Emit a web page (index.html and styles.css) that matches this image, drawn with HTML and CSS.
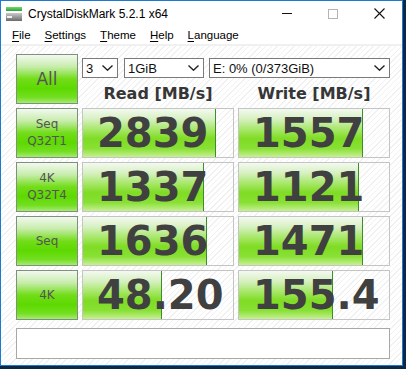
FILE: index.html
```html
<!DOCTYPE html>
<html lang="en">
<head>
  <meta charset="UTF-8">
  <title>CrystalDiskMark 5.2.1 x64</title>
  <link rel="stylesheet" href="styles.css">
</head>
<body>
  <div class="window">
    <div class="titlebar">
      <svg class="app-icon" width="16" height="14" viewBox="0 0 16 14">
        <defs>
          <linearGradient id="gTop" x1="0" y1="0" x2="0" y2="1">
            <stop offset="0" stop-color="#6fdc6f"/>
            <stop offset="1" stop-color="#2f9e3a"/>
          </linearGradient>
          <linearGradient id="gBody" x1="0" y1="0" x2="0" y2="1">
            <stop offset="0" stop-color="#c9c9c9"/>
            <stop offset="1" stop-color="#6a6a6a"/>
          </linearGradient>
        </defs>
        <rect x="0" y="0" width="16" height="4" fill="url(#gTop)"/>
        <rect x="0" y="6" width="16" height="8" fill="url(#gBody)"/>
        <rect x="1" y="9" width="5" height="2" fill="#f2f2f2"/>
      </svg>
      <span class="title">CrystalDiskMark 5.2.1 x64</span>
      <div class="caption">
        <div class="cap-btn"><span class="ico-min"></span></div>
        <div class="cap-btn"><span class="ico-max"></span></div>
        <div class="cap-btn">
          <svg width="11" height="11" viewBox="0 0 11 11">
            <path d="M0.5 0.5 L10.5 10.5 M10.5 0.5 L0.5 10.5" stroke="#111" stroke-width="1.1" fill="none"/>
          </svg>
        </div>
      </div>
    </div>

    <div class="menubar">
      <span class="menu-item"><u>F</u>ile</span>
      <span class="menu-item"><u>S</u>ettings</span>
      <span class="menu-item"><u>T</u>heme</span>
      <span class="menu-item"><u>H</u>elp</span>
      <span class="menu-item"><u>L</u>anguage</span>
    </div>

    <div class="main">
      <div class="grid">
        <div class="label label-all">All</div>
        <div class="top">
          <div class="combos">
            <div class="combo combo-count"><span>3</span>
              <svg width="11" height="6" viewBox="0 0 11 6"><polyline points="0.5,0.5 5.5,5.2 10.5,0.5" fill="none" stroke="#222" stroke-width="1.4"/></svg>
            </div>
            <div class="combo combo-size"><span>1GiB</span>
              <svg width="11" height="6" viewBox="0 0 11 6"><polyline points="0.5,0.5 5.5,5.2 10.5,0.5" fill="none" stroke="#222" stroke-width="1.4"/></svg>
            </div>
            <div class="combo combo-drive"><span>E: 0% (0/373GiB)</span>
              <svg width="11" height="6" viewBox="0 0 11 6"><polyline points="0.5,0.5 5.5,5.2 10.5,0.5" fill="none" stroke="#222" stroke-width="1.4"/></svg>
            </div>
          </div>
          <div class="heads">
            <div class="head">Read [MB/s]</div>
            <div class="head">Write [MB/s]</div>
          </div>
        </div>

        <div class="label">Seq<br>Q32T1</div>
        <div class="cell"><div class="bar" style="width: 88.7%"></div><div class="num">2839</div></div>
        <div class="cell"><div class="bar" style="width: 82.7%"></div><div class="num">1557</div></div>

        <div class="label">4K<br>Q32T4</div>
        <div class="cell"><div class="bar" style="width: 80.7%"></div><div class="num">1337</div></div>
        <div class="cell"><div class="bar" style="width: 80%"></div><div class="num">1121</div></div>

        <div class="label">Seq</div>
        <div class="cell"><div class="bar" style="width: 82.7%"></div><div class="num">1636</div></div>
        <div class="cell"><div class="bar" style="width: 82.7%"></div><div class="num">1471</div></div>

        <div class="label">4K</div>
        <div class="cell"><div class="bar" style="width: 52.7%"></div><div class="num">48.20</div></div>
        <div class="cell"><div class="bar" style="width: 62.7%"></div><div class="num">155.4</div></div>
      </div>
      <div class="comment"></div>
    </div>
  </div>
</body>
</html>
```

FILE: styles.css
```css
body {
  margin: 0;
  background: #0d2847;
  font-family: "Liberation Sans", Arial, sans-serif;
  color: #000;
}

.window {
  width: 403px;
  height: 366px;
  box-sizing: border-box;
  border: 1px solid #1a7bd0;
  background: #fff;
  display: flex;
  flex-direction: column;
}

/* title bar */
.titlebar {
  height: 25px;
  flex: none;
  display: flex;
  align-items: center;
  padding-left: 5px;
  font-size: 12px;
}

.app-icon {
  flex: none;
  margin-right: 6px;
}

.caption {
  margin-left: auto;
  display: flex;
  height: 100%;
}

.cap-btn {
  width: 46px;
  display: flex;
  align-items: center;
  justify-content: center;
}

.ico-min {
  width: 10px;
  height: 1px;
  background: #111;
}

.ico-max {
  width: 8px;
  height: 8px;
  border: 1px solid #b4b4b4;
}

/* menu */
.menubar {
  height: 18px;
  flex: none;
  display: flex;
  padding-left: 4px;
  font-size: 11.5px;
  line-height: 18px;
  border-bottom: 2px solid #f0f0f0;
}

.menu-item {
  padding: 0 7px;
}

.menu-item u {
  text-decoration-thickness: 1px;
  text-underline-offset: 2px;
}

/* main area */
.main {
  flex: 1;
  padding: 8px 0 0 15px;
  background: repeating-linear-gradient(135deg, #ffffff 0 3px, #f1f1f1 3px 4px);
}

.grid {
  display: grid;
  grid-template-columns: 62px 152px 152px;
  grid-auto-rows: 50px;
  gap: 4px;
}

.label {
  box-sizing: border-box;
  border: 1px solid #7e917c;
  background: linear-gradient(#f3f9f1 0%, #c6ecaa 25%, #72dd18 50%, #5dd900 70%, #72de20 88%, #a6ea72 100%);
  display: flex;
  align-items: center;
  justify-content: center;
  text-align: center;
  font-family: "DejaVu Sans", sans-serif;
  font-size: 12px;
  line-height: 17px;
  color: #555;
}

.label-all {
  font-size: 17px;
}

.top {
  grid-column: 2 / 4;
}

.combos {
  display: flex;
  margin-top: 4px;
}

.combo {
  box-sizing: border-box;
  height: 20px;
  border: 1px solid #7a7a7a;
  background: #fff;
  display: flex;
  align-items: center;
  justify-content: space-between;
  padding: 0 4px 0 3px;
  font-size: 13px;
  color: #111;
}

.combo-count {
  width: 36px;
}

.combo-size {
  width: 80px;
  margin-left: 6px;
}

.combo-drive {
  width: 181px;
  margin-left: 5px;
}

.heads {
  display: grid;
  grid-template-columns: 152px 152px;
  gap: 4px;
  margin-top: 6px;
}

.head {
  text-align: center;
  font: bold 16px/20px "DejaVu Sans", sans-serif;
  color: #363636;
}

.cell {
  box-sizing: border-box;
  border: 1px solid #c4c4c4;
  display: grid;
}

.bar {
  grid-area: 1 / 1;
  box-sizing: border-box;
  border-right: 1px solid #3f8c2c;
  background: linear-gradient(#f3f9ef 0%, #d8f1c4 20%, #a2e660 45%, #7fdc24 62%, #88e034 82%, #c6f092 100%);
}

.num {
  grid-area: 1 / 1;
  padding-left: 14px;
  font: bold 40px/48px "DejaVu Sans", sans-serif;
  color: #404040;
}

.comment {
  box-sizing: border-box;
  width: 374px;
  height: 31px;
  margin-top: 8px;
  border: 1px solid #a8a8a8;
  background: #fff;
}
```
